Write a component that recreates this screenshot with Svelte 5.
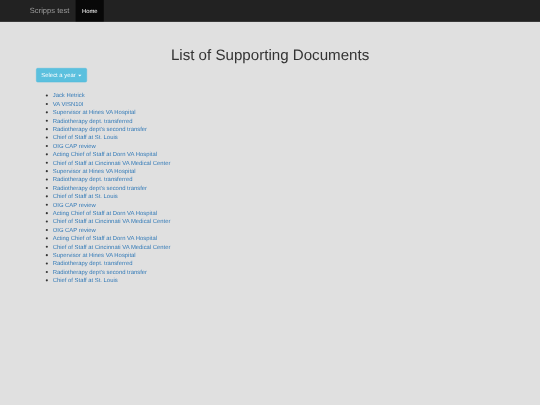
<script>
  const docs = [
    "Jack Hetrick", "VA VISN10I", "Supervisor at Hines VA Hospital", "Radiotherapy dept. transferred",
    "Radiotherapy dept's second transfer", "Chief of Staff at St. Louis", "OIG CAP review",
    "Acting Chief of Staff at Dorn VA Hospital", "Chief of Staff at Cincinnati VA Medical Center",
    "Supervisor at Hines VA Hospital", "Radiotherapy dept. transferred", "Radiotherapy dept's second transfer",
    "Chief of Staff at St. Louis", "OIG CAP review", "Acting Chief of Staff at Dorn VA Hospital",
    "Chief of Staff at Cincinnati VA Medical Center", "OIG CAP review", "Acting Chief of Staff at Dorn VA Hospital",
    "Chief of Staff at Cincinnati VA Medical Center", "Supervisor at Hines VA Hospital",
    "Radiotherapy dept. transferred", "Radiotherapy dept's second transfer", "Chief of Staff at St. Louis"
  ];
</script>

<div class="viewport">
  <div class="page">
    <nav class="navbar">
      <a class="brand" href="#top">Scripps test</a>
      <a class="active" href="#top">Home</a>
    </nav>
    <main class="content">
      <h1>List of Supporting Documents</h1>
      <button class="btn" type="button">Select a year <span class="caret"></span></button>
      <ul>
        {#each docs as doc}
          <li><a href="#top">{doc}</a></li>
        {/each}
      </ul>
    </main>
  </div>
</div>

<style>
  :global(body) {
    margin: 0;
    background: #e0e0e0;
  }
  .viewport {
    width: 540px;
    height: 405px;
    overflow: hidden;
    filter: blur(0.55px);
  }
  .page {
    width: 1286px;
    height: 965px;
    transform: scale(0.42);
    transform-origin: 0 0;
    background: #e0e0e0;
    font-family: "Liberation Sans", Arial, sans-serif;
    font-size: 14px;
    line-height: 20px;
    color: #333;
    text-rendering: geometricPrecision;
  }
  .navbar {
    box-sizing: border-box;
    height: 52px;
    padding-left: 56px;
    display: flex;
    background: #222;
    border-bottom: 1px solid #333;
  }
  .navbar a {
    text-decoration: none;
    display: flex;
    align-items: center;
    padding: 0 15px;
  }
  .brand {
    color: #9d9d9d;
    font-size: 18px;
    font-weight: 400;
  }
  .active {
    color: #fff;
    background: #080808;
  }
  .content {
    padding: 0 85.5px;
  }
  h1 {
    margin: 60px 0 10.5px;
    text-align: center;
    font-size: 36px;
    line-height: 39.6px;
    font-weight: 400;
    color: #333;
  }
  .btn {
    display: block;
    box-sizing: border-box;
    margin: 0;
    height: 34px;
    padding: 6px 12px;
    border: 1px solid #46b8da;
    border-radius: 4px;
    background: #5bc0de;
    color: #fff;
    font: inherit;
    text-rendering: inherit;
  }
  .caret {
    display: inline-block;
    margin-left: 2px;
    vertical-align: middle;
    border-top: 4px solid #fff;
    border-left: 4px solid transparent;
    border-right: 4px solid transparent;
  }
  ul {
    margin: 20px 0 0;
    padding: 0 0 0 40px;
  }
  li {
    height: 20px;
  }
  li::marker {
    font-size: 18px;
    color: #333;
  }
  li a {
    color: #337ab7;
    text-decoration: none;
  }
</style>
